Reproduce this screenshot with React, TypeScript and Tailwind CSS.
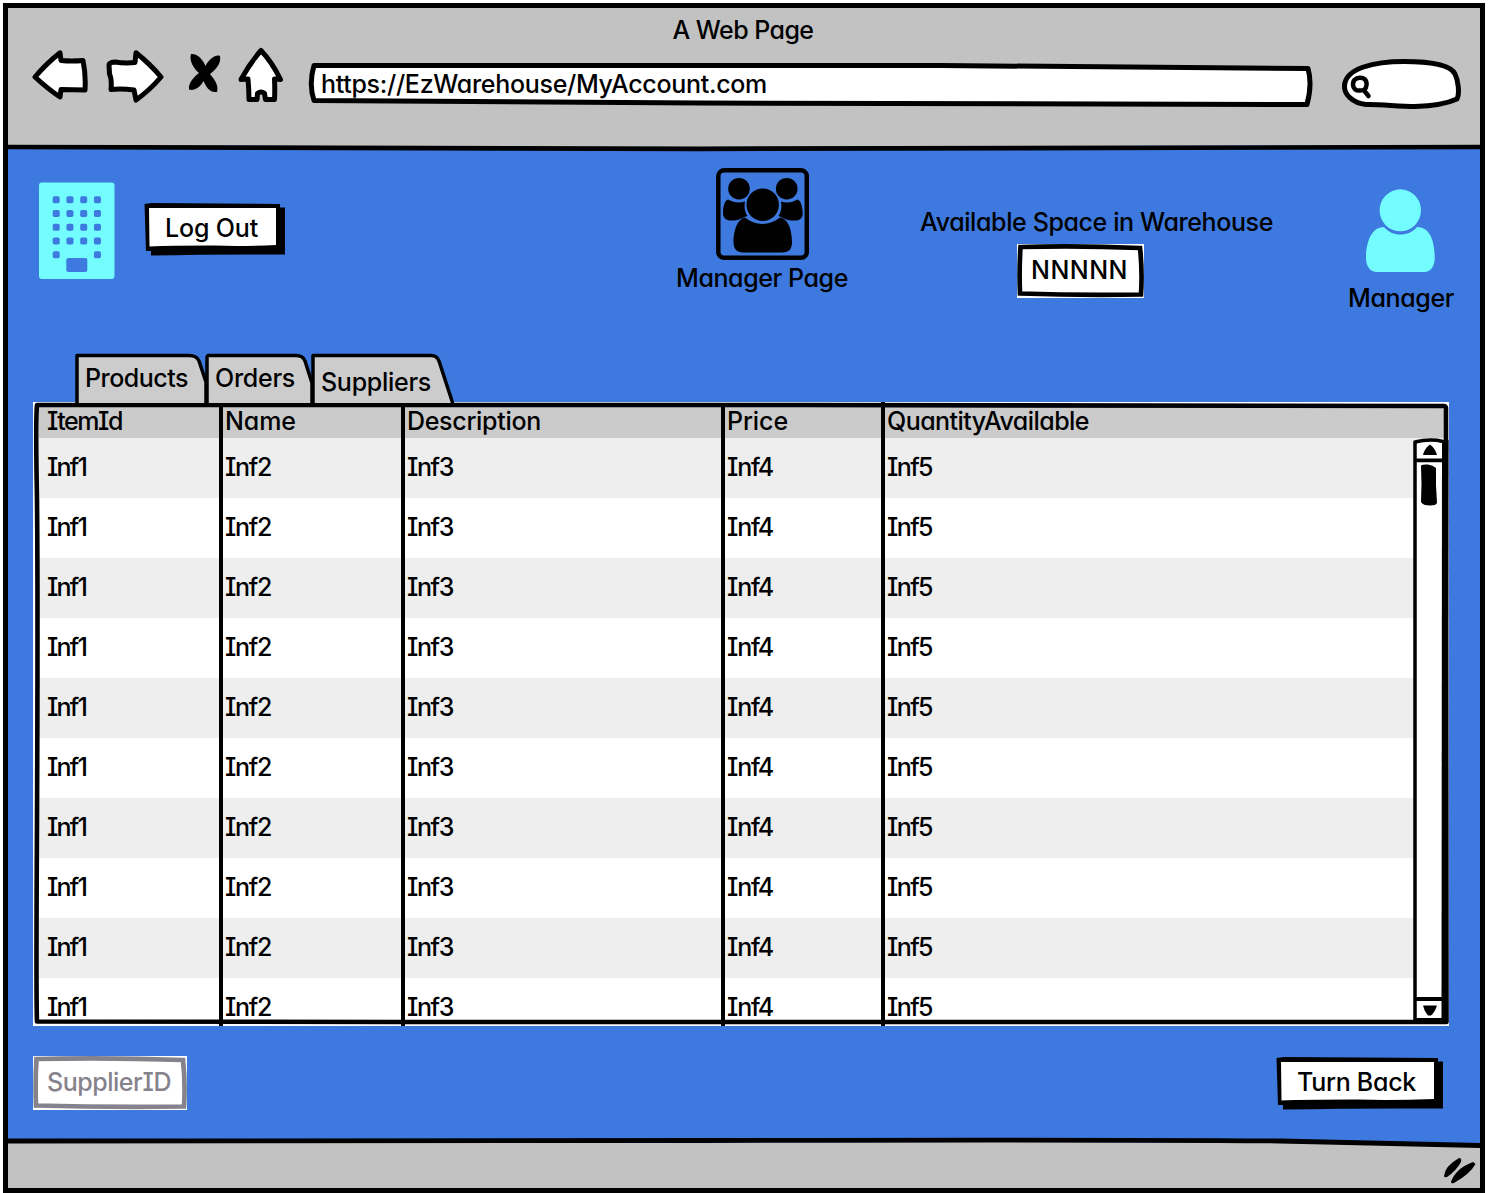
import { useLayoutEffect, useRef, useState } from 'react';
import type { ReactNode } from 'react';

/* Single line of text whose tracking is adjusted so it spans `w` pixels. */
function Label({ children, w, className = '' }: { children: string; w: number; className?: string }) {
  const ref = useRef<HTMLSpanElement>(null);
  const [tracking, setTracking] = useState(0);
  useLayoutEffect(() => {
    if (ref.current) {
      const natural = ref.current.getBoundingClientRect().width;
      setTracking((w - natural) / children.length);
    }
  }, [children, w]);
  return (
    <span ref={ref} className={`inline-block whitespace-pre ${className}`} style={{ letterSpacing: `${tracking}px` }}>
      {children}
    </span>
  );
}

/* Drawing whose viewBox origin is given explicitly, at 1:1 scale. */
function Sketch({ x, y, w, h, className = '', children }: { x: number; y: number; w: number; h: number; className?: string; children: ReactNode }) {
  return (
    <svg width={w} height={h} viewBox={`${x} ${y} ${w} ${h}`} className={`block shrink-0 ${className}`} fill="none" strokeLinejoin="round" strokeLinecap="round">
      {children}
    </svg>
  );
}

function Toolbar() {
  return (
    <div className="mt-[3px] flex items-start">
      <Sketch x={32} y={48} w={56} h={56} className="ml-6">
        <path d="M35 77 Q46 64 60 52.800 L61 60.500 Q72 61.500 83 60.500 Q86 75 85 90 L61 89.500 L60 97 Q48 89 35 77Z" fill="#fff" stroke="#000" strokeWidth="5" />
      </Sketch>
      <Sketch x={106} y={48} w={58} h={56} className="ml-[18px]">
        <path d="M109 65 Q109 62.500 115 62 Q125 63.500 135 62.500 L136 52.800 Q150 64 161 77 Q150 90 136 100 L134 90 Q122 88.500 111 89.500 Q112 79 109.500 74Z" fill="#fff" stroke="#000" strokeWidth="5" />
      </Sketch>
      <Sketch x={187} y={50} w={36} h={46} className="mt-[2px] ml-[23px]">
        <path d="M191 54 C198 53.500 203 60 205.500 66 C209 59 216 54 220 56 C221.500 64 215 70 210 74 C214 79 219 85 217 92 C210 93 206 87 203.500 81 C200 88 194 91 189 89.500 C188 83 194 77 199 73 C193 68 189 60 191 54Z" fill="#000" />
      </Sketch>
      <Sketch x={237} y={46} w={48} h={58} className="-mt-[2px] ml-[14px]">
        <path d="M261 50.500 Q272 62 280.500 79.500 L274.500 79 Q275 90 274.500 99.500 L265.500 99.500 L264.500 93.500 Q261 90.500 257.500 93.500 L257 99.500 L249 99.500 Q249 90 248 79 L241 79.500 Q250 63 261 50.500Z" fill="#fff" stroke="#000" strokeWidth="5" />
      </Sketch>
      <div className="relative mt-[13px] ml-[23px] h-[46px] w-[1005px]">
        <Sketch x={308} y={61} w={1005} h={46} className="absolute inset-0">
          <path d="M314 65.500 Q700 64.500 940 65.500 L1308 68.500 Q1312.500 84 1307 104.500 L700 103 L314 100.500 Q308.500 84 314 65.500Z" fill="#fff" stroke="#000" strokeWidth="5" />
        </Sketch>
        <Label w={446} className="relative mt-2 ml-[13px]">https://EzWarehouse/MyAccount.com</Label>
      </div>
      <Sketch x={1340} y={57} w={124} h={53} className="mt-[9px] ml-[27px]">
        <path d="M1366 104.500 C1352 103 1344 94 1344.500 86 C1345 68 1375 61.500 1404 61.500 C1430 61.500 1451 65 1455 74 C1458 80 1460 93 1457 99 C1446 104 1432 106 1415 106.500 C1398 106.500 1380 104 1366 104.500Z" fill="#fff" stroke="#000" strokeWidth="5" />
        <path d="M1366.500 85 C1367 79 1363 77.500 1359.500 77.800 C1355 78.300 1353 81 1353 84.500 C1353 88.500 1356 91 1360 90.500 C1364 90.500 1366 89.500 1366.500 85Z M1364.500 91 L1368.500 96" stroke="#000" strokeWidth="4.500" />
      </Sketch>
    </div>
  );
}

function Building() {
  const dots: ReactNode[] = [];
  for (let r = 0; r < 5; r++) {
    for (let c = 0; c < 4; c++) {
      if (r === 4 && (c === 1 || c === 2)) continue;
      dots.push(<rect key={`${r}-${c}`} x={52.7 + c * 13.75} y={196.2 + r * 13.75} width="7" height="7" rx="1.700" fill="#3d79de" />);
    }
  }
  return (
    <Sketch x={39} y={182} w={76} h={98} className="mt-8 ml-[31px]">
      <rect x="39" y="182.500" width="75.500" height="96.500" rx="3" fill="#73fdff" />
      {dots}
      <rect x="66.300" y="258" width="21" height="14" rx="2" fill="#3d79de" />
    </Sketch>
  );
}

function SketchButton({ width, label, labelWidth, className }: { width: number; label: string; labelWidth: number; className: string }) {
  const r = width - 5;
  const s = width;
  return (
    <button className={`relative flex h-[54px] shrink-0 items-start ${className}`}>
      <Sketch x={0} y={0} w={width} h={54}>
        <path d={`M7 4.500 H${s} V51.500 Q${s / 2} 51 7 52.500Z`} fill="#000" />
        <path d={`M0.500 1 L8 0 L${r} 1 V48 H2Z`} fill="#000" />
        <path d={`M5 5 H${s - 9} V42 Q${s * 0.7} 43.500 ${s * 0.5} 42.600 Q30 42.500 5.500 43.500Z`} fill="#fff" />
      </Sketch>
      <Label w={labelWidth} className="absolute top-[10px] left-[21px]">{label}</Label>
    </button>
  );
}

function GroupIcon() {
  return (
    <Sketch x={716} y={168} w={93} h={93}>
      <rect x="718.300" y="170.300" width="88.500" height="87.500" rx="6" stroke="#000" strokeWidth="4.500" />
      <g fill="#000">
        <circle cx="739" cy="188.700" r="10.800" />
        <circle cx="786.700" cy="188.700" r="10.800" />
        <path d="M728 199.500 C734 203 740 203 745 201.500 C744 208 745 212 747.500 216 C743 217 740 221 730 220.500 C725 220 723 217 723 213 C723 208 724 201 728 199.500Z" />
        <path d="M797.500 199.500 C792 203 786 203 781 201.500 C782 208 781 212 778.500 216 C782 217 785 221 796 220.500 C801 220 803 217 802.700 213 C802.500 208 801.500 201 797.500 199.500Z" />
        <circle cx="762.700" cy="204.700" r="16.200" />
        <path d="M745 217.500 C755 226 770 226 780 217.500 C789 219 792 232 792 242 C792 249 789 252.500 782 252.500 H743 C737 252.500 733.500 249 733.500 242 C733.500 232 737 219 745 217.500Z" />
      </g>
    </Sketch>
  );
}

function PersonIcon() {
  return (
    <Sketch x={1366} y={188} w={70} h={85}>
      <ellipse cx="1400.300" cy="210.300" rx="20.700" ry="21" fill="#73fdff" />
      <path d="M1384 227 C1392 237 1409 237 1417 227 C1431 227 1434.700 243 1434.700 258 C1434.700 266 1431 272 1424 272 H1377 C1370 272 1366 266 1366 258 C1366 243 1371 227 1384 227Z" fill="#73fdff" />
    </Sketch>
  );
}

function FieldBox({ w, stroke, children }: { w: number; stroke: string; children: ReactNode }) {
  return (
    <div className="relative h-[54px]">
      <Sketch x={0} y={0} w={w} h={54} className="absolute inset-0 bg-white">
        <path d={`M3.500 3 Q${w / 2} 1.500 ${w - 4} 4 Q${w - 1.500} 27 ${w - 3} 50.500 Q${w / 2} 51.500 3 49.500 Q2 27 3.500 3Z`} stroke={stroke} strokeWidth="4.700" strokeLinejoin="miter" />
      </Sketch>
      <div className="relative pt-[11px] pl-[14px]">{children}</div>
    </div>
  );
}

function Tab({ x, w, d, label, labelWidth, textClass }: { x: number; w: number; d: string; label: string; labelWidth: number; textClass: string }) {
  return (
    <div className="relative h-[50px] shrink-0">
      <div className={textClass}>
        <Label w={labelWidth}>{label}</Label>
      </div>
      <Sketch x={x} y={353} w={w} h={50} className="absolute top-0 left-0 -z-10">
        <path d={d} fill="#ccc" stroke="#000" strokeWidth="3.500" />
      </Sketch>
    </div>
  );
}

const columns = [
  { name: 'ItemId', width: 75, cell: 'Inf1', cellWidth: 39 },
  { name: 'Name', width: 71, cell: 'Inf2', cellWidth: 46 },
  { name: 'Description', width: 134, cell: 'Inf3', cellWidth: 46 },
  { name: 'Price', width: 61, cell: 'Inf4', cellWidth: 46 },
  { name: 'QuantityAvailable', width: 202, cell: 'Inf5', cellWidth: 45 },
];

const grid = 'grid grid-cols-[182px_182px_320px_160px_564px]';

function ScrollBar() {
  return (
    <Sketch x={1412} y={437} w={37} h={589} className="absolute top-[35px] right-0">
      <path d="M1414 440 H1445 V1021 H1414Z" fill="#fff" />
      <path d="M1415 442 Q1430 438.500 1443 441.500 M1415 442 L1415 1021" stroke="#000" strokeWidth="3.500" />
      <path d="M1442 440 H1448.500 L1447 1024 H1441.500Z" fill="#000" />
      <path d="M1415 460.300 H1443 M1415 999 H1443 M1415 1020 H1443" stroke="#000" strokeWidth="3.800" strokeLinecap="butt" />
      <path d="M1430 444.500 Q1435 448 1437 455 H1423 Q1424 449 1430 444.500Z" fill="#000" />
      <path d="M1423 1005.500 H1437 Q1435 1012 1431 1015.500 H1428 Q1424 1011 1423 1005.500Z" fill="#000" />
      <path d="M1421 465.500 Q1423 464 1428 464.500 Q1433 465 1436 468 Q1435.500 485 1437 503 Q1436 505.500 1430 505.500 Q1423 505.500 1421 502 Q1422 485 1421 465.500Z" fill="#000" />
    </Sketch>
  );
}

function DataTable() {
  return (
    <div className="relative ml-[25px] h-[624px] w-[1416px] bg-white">
      <div className="h-[622px] overflow-hidden pt-[3px] pr-[2px] pl-[6px]">
        <div className={`${grid} h-[33px] bg-[#cbcbcb]`}>
          {columns.map((c, i) => (
            <div key={c.name} className={i === 0 ? 'pl-2' : 'pl-1'}>
              <Label w={c.width} className="mt-[1px]">{c.name}</Label>
            </div>
          ))}
        </div>
        {Array.from({ length: 10 }, (_, r) => (
          <div key={r} className={`${grid} h-[60px] ${r % 2 === 0 ? 'bg-[#eee]' : 'bg-white'}`}>
            {columns.map((c, i) => (
              <div key={c.name} className={i === 0 ? 'pt-[14px] pl-2' : 'pt-[14px] pl-1'}>
                <Label w={c.cellWidth}>{c.cell}</Label>
              </div>
            ))}
          </div>
        ))}
      </div>
      <ScrollBar />
      <Sketch x={33} y={402} w={1416} h={624} className="absolute inset-0">
        <path d="M37 405 Q400 404.500 800 405 Q1100 405 1444 406 Q1446.500 406 1446 410 L1446.500 1022 Q900 1023 400 1022 L37 1021.500 Q36 1000 37 820 Q38 600 37 500 Q35.500 420 37 405Z" stroke="#000" strokeWidth="4.600" />
        <path d="M221 404 V1026 M403 404 V1026 M723 404 V1026 M883 402 V1026" stroke="#000" strokeWidth="4" strokeLinecap="butt" />
      </Sketch>
    </div>
  );
}

export default function App() {
  return (
    <div className="h-[1193px] w-[1490px] overflow-hidden bg-white pt-[3px] pl-[3px] font-['Inter','Open_Sans',sans-serif] text-[25px] leading-[30px] font-medium text-black [font-feature-settings:'cv08','cv11']">
      <div className="flex h-[1190px] w-[1482px] flex-col border-5 border-black bg-[#c2c2c2]">
        <header className="h-[137px] shrink-0">
          <div className="pt-[7px] pr-[2px] text-center">
            <Label w={141}>A Web Page</Label>
          </div>
          <Toolbar />
        </header>

        <main className="relative isolate h-[998px] shrink-0 bg-[#3d79de]">
          <Sketch x={8} y={143} w={1472} h={9} className="absolute -top-[2px] left-0">
            <path d="M8 143 H1480 V145 Q1000 146 700 147 Q300 147 8 145Z" fill="#c2c2c2" />
            <path d="M8 147 Q300 149 700 148.800 Q1000 148.500 1480 147" stroke="#000" strokeWidth="4.700" />
          </Sketch>

          <div className="flex h-[208px] items-start pt-[5px]">
            <Building />
            <SketchButton width={141} label="Log Out" labelWidth={93} className="mt-[53px] ml-[29px]" />
            <div className="mt-[18px] ml-[391px] flex w-[172px] shrink-0 flex-col items-center">
              <GroupIcon />
              <Label w={172} className="mt-[2px]">Manager Page</Label>
            </div>
            <div className="mt-[57px] ml-[72px] w-[353px] shrink-0">
              <Label w={353}>Available Space in Warehouse</Label>
              <div className="mt-[7px] ml-[97px] w-[127px]">
                <FieldBox w={127} stroke="#000">
                  <Label w={97}>NNNNN</Label>
                </FieldBox>
              </div>
            </div>
            <div className="mt-[38px] ml-[75px] flex w-[106px] shrink-0 flex-col items-center">
              <PersonIcon />
              <Label w={106} className="mt-[10px]">Manager</Label>
            </div>
          </div>

          <div className="relative z-10 flex h-[49px] pl-[67px]">
            <Tab x={75} w={133} label="Products" labelWidth={103} textClass="w-[130px] pt-[10px] pl-[10px]" d="M77 410 V355.500 H189 Q197 355.500 199 361 L206 382 V410" />
            <Tab x={205} w={110} label="Orders" labelWidth={80} textClass="w-[106px] pt-[10px] pl-[10px]" d="M207 410 V357 L208 355.500 H296 Q303 355.500 305 361 L312 383 V410" />
            <Tab x={311} w={143} label="Suppliers" labelWidth={110} textClass="w-[143px] pt-[14px] pl-[10px]" d="M313 410 V355.500 H431 Q437 355.500 439 361 L453 404 V410" />
          </div>

          <DataTable />

          <div className="flex items-start justify-between pt-[30px] pr-[37px] pl-[25px]">
            <div className="w-[154px] text-[#85828c]">
              <FieldBox w={154} stroke="#85828c">
                <Label w={124}>SupplierID</Label>
              </FieldBox>
            </div>
            <SketchButton width={167} label="Turn Back" labelWidth={119} className="mt-[1px]" />
          </div>
        </main>

        <footer className="relative flex flex-1 justify-end">
          <Sketch x={8} y={1136} w={1472} h={14} className="absolute -top-[7px] left-0">
            <path d="M8 1141 Q500 1140.500 1200 1140 L1480 1145.500 V1150 H8Z" fill="#c2c2c2" />
            <path d="M8 1141 Q300 1142 700 1140.500 Q1100 1139.500 1280 1141 L1480 1145.500" stroke="#000" strokeWidth="4.800" />
          </Sketch>
          <Sketch x={1443} y={1156} w={34} h={30} className="mt-[13px] mr-[3px]">
            <path d="M1444 1176 Q1445 1166 1459 1158 Q1462 1158 1461 1162 Q1456 1171 1447 1177 Q1444 1178 1444 1176Z M1451 1182 Q1456 1168 1473 1162 L1475.500 1164 Q1470 1174 1454 1183Q1451 1184 1451 1182Z" fill="#000" />
          </Sketch>
        </footer>
      </div>
    </div>
  );
}
